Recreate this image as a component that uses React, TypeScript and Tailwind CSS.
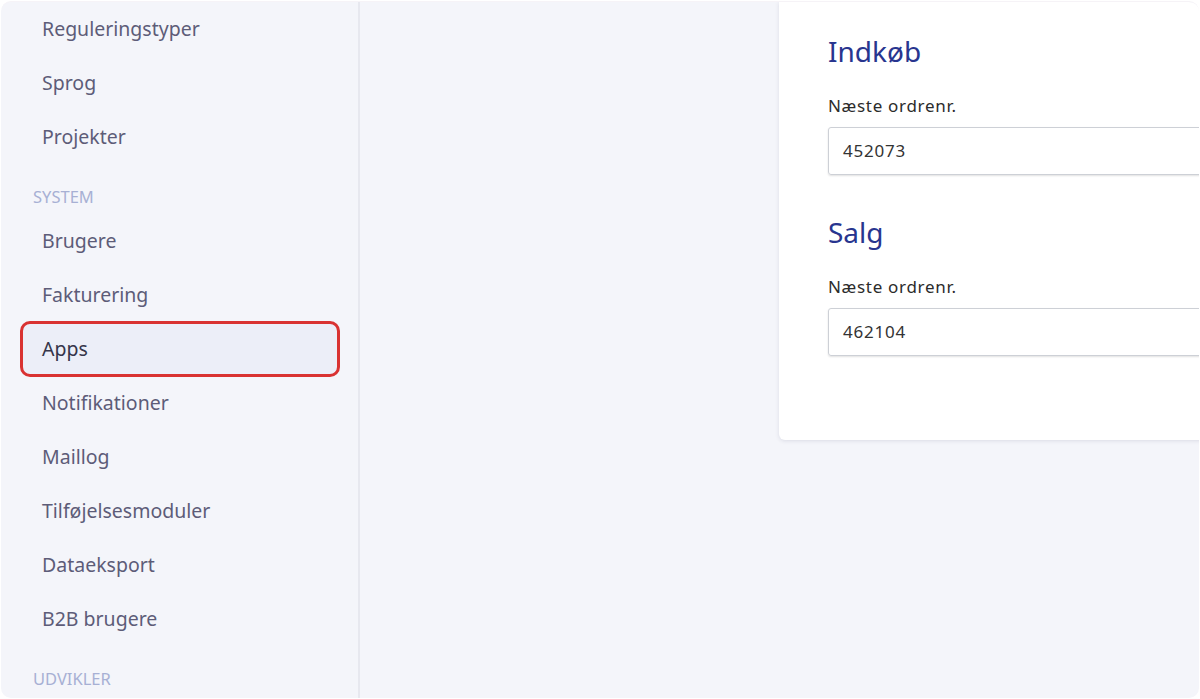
const groups = [
  { items: ["Reguleringstyper", "Sprog", "Projekter"] },
  {
    title: "SYSTEM",
    items: [
      "Brugere",
      "Fakturering",
      "Apps",
      "Notifikationer",
      "Maillog",
      "Tilføjelsesmoduler",
      "Dataeksport",
      "B2B brugere",
    ],
  },
  { title: "UDVIKLER", items: [] },
];

const Field = ({ title, value }: { title: string; value: string }) => (
  <div>
    <h2 className="text-[28px] leading-[32px] text-[#28358f]">{title}</h2>
    <label className="block mt-[29px] text-[17px] leading-[20px] tracking-[0.7px] text-[#2b2b2b]">
      Næste ordrenr.
    </label>
    <div className="mt-[11px] h-[48px] flex items-center pl-[14px] border border-[#cdd0d6] rounded-[3px] shadow-[0_1px_2px_rgba(0,0,0,0.12)] text-[17px] tracking-[0.8px] text-[#333]">
      {value}
    </div>
  </div>
);

export default function App() {
  return (
    <div className="w-[1200px] h-[699px] bg-white p-px font-['Noto_Sans',sans-serif]">
      <div className="h-full flex rounded-[10px] overflow-hidden bg-[#f4f5fa] border-t border-[#f6f3f7]">
        <aside className="w-[359px] shrink-0 border-r-2 border-[#e7e8ef] pl-[19px] pr-[18px]">
          {groups.map((g, gi) => (
            <div key={gi}>
              {g.title && (
                <div className="pt-[25px] pb-[9px] pl-[13px] text-[16.5px] leading-[16px] text-[#a7b0d4]">
                  {g.title}
                </div>
              )}
              {g.items.map((item) =>
                item === "Apps" ? (
                  <div
                    key={item}
                    className="h-[56px] -my-px flex items-center pl-[19px] rounded-[10px] border-[3px] border-[#d93232] bg-[#eceef8] text-[19.5px] text-[#35354a]"
                  >
                    {item}
                  </div>
                ) : (
                  <div
                    key={item}
                    className="h-[54px] flex items-center pl-[22px] text-[19.5px] text-[#5d5c78]"
                  >
                    {item}
                  </div>
                )
              )}
            </div>
          ))}
        </aside>
        <main className="flex-1 pl-[419px]">
          <div className="w-[460px] bg-white rounded-bl-[6px] shadow-[0_1px_4px_rgba(40,40,80,0.12)] pl-[49px] pt-[33px] pb-[84px] flex flex-col gap-[41px]">
            <Field title="Indkøb" value="452073" />
            <Field title="Salg" value="462104" />
          </div>
        </main>
      </div>
    </div>
  );
}
